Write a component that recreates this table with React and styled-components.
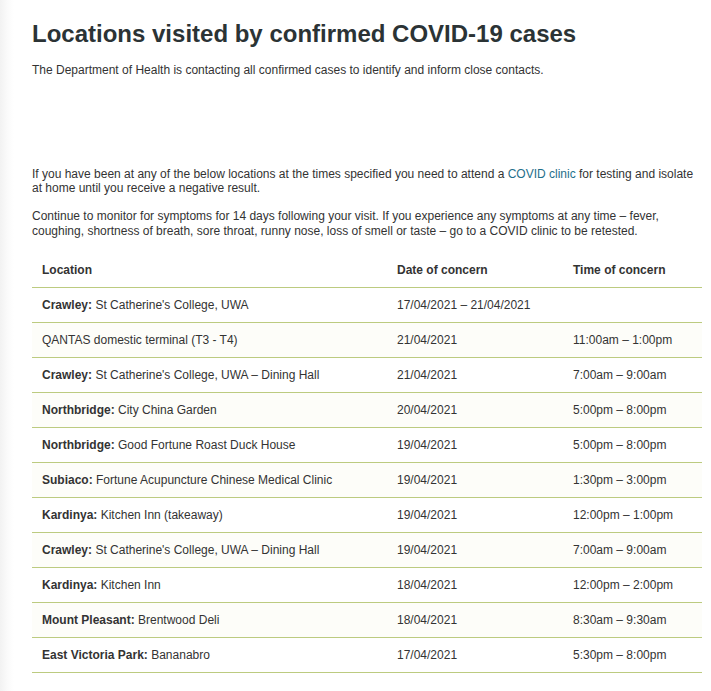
import { createGlobalStyle, styled } from "styled-components";

const GlobalStyle = createGlobalStyle`
  body {
    margin: 0;
    background: linear-gradient(to right, #f2f2f2 0, #fbfbfb 8px, #ffffff 14px);
    font-family: "Liberation Sans", Arial, sans-serif;
    color: #333;
  }
`;

const Page = styled.div`
  width: 670px;
  padding: 18px 0 20px 32px;
`;

const Title = styled.h1`
  margin: 0 0 14px;
  font-size: 24px;
  line-height: 31px;
  font-weight: 700;
  color: #2b3335;
`;

const Text = styled.p`
  margin: 0 0 ${(p) => p.$gap || 14}px;
  font-size: 12px;
  line-height: ${(p) => p.$lh || 14}px;
  color: #333;
`;

const Link = styled.a`
  color: #1f6f8b;
  text-decoration: none;
`;

const Table = styled.table`
  width: 670px;
  border-collapse: collapse;
  table-layout: fixed;
  font-size: 12px;
  margin-top: 1px;
`;

const Head = styled.th`
  text-align: left;
  font-weight: 700;
  color: #333;
  height: 34px;
  padding: 0 10px;
  border-bottom: 1px solid #bccb80;
`;

const Cell = styled.td`
  height: 34px;
  padding: 0 10px;
  border-bottom: 1px solid #bccb80;
  color: #333;
`;

const Row = styled.tr`
  background: ${(p) => (p.$odd ? "#fdfdf9" : "#ffffff")};
`;

const rows = [
  ["Crawley:", "St Catherine's College, UWA", "17/04/2021 – 21/04/2021", ""],
  ["", "QANTAS domestic terminal (T3 - T4)", "21/04/2021", "11:00am – 1:00pm"],
  ["Crawley:", "St Catherine's College, UWA – Dining Hall", "21/04/2021", "7:00am – 9:00am"],
  ["Northbridge:", "City China Garden", "20/04/2021", "5:00pm – 8:00pm"],
  ["Northbridge:", "Good Fortune Roast Duck House", "19/04/2021", "5:00pm – 8:00pm"],
  ["Subiaco:", "Fortune Acupuncture Chinese Medical Clinic", "19/04/2021", "1:30pm – 3:00pm"],
  ["Kardinya:", "Kitchen Inn (takeaway)", "19/04/2021", "12:00pm – 1:00pm"],
  ["Crawley:", "St Catherine's College, UWA – Dining Hall", "19/04/2021", "7:00am – 9:00am"],
  ["Kardinya:", "Kitchen Inn", "18/04/2021", "12:00pm – 2:00pm"],
  ["Mount Pleasant:", "Brentwood Deli", "18/04/2021", "8:30am – 9:30am"],
  ["East Victoria Park:", "Bananabro", "17/04/2021", "5:30pm – 8:00pm"],
];

const App = () => {
  return (
    <>
      <GlobalStyle />
      <Page>
        <Title>Locations visited by confirmed COVID-19 cases</Title>
        <Text $gap={90}>
          The Department of Health is contacting all confirmed cases to identify and inform close contacts.
        </Text>
        <Text>
          If you have been at any of the below locations at the times specified you need to attend a{" "}
          <Link href="#">COVID clinic</Link> for testing and isolate at home until you receive a negative result.
        </Text>
        <Text $lh={15}>
          Continue to monitor for symptoms for 14 days following your visit. If you experience any symptoms at any
          time – fever, coughing, shortness of breath, sore throat, runny nose, loss of smell or taste – go to a
          COVID clinic to be retested.
        </Text>
        <Table>
          <colgroup>
            <col style={{ width: 355 }} />
            <col style={{ width: 176 }} />
            <col style={{ width: 139 }} />
          </colgroup>
          <thead>
            <tr>
              <Head>Location</Head>
              <Head>Date of concern</Head>
              <Head>Time of concern</Head>
            </tr>
          </thead>
          <tbody>
            {rows.map((r, i) => (
              <Row key={i} $odd={i % 2 === 1}>
                <Cell>
                  {r[0] && <strong>{r[0]}</strong>}
                  {r[0] ? " " : ""}
                  {r[1]}
                </Cell>
                <Cell>{r[2]}</Cell>
                <Cell>{r[3]}</Cell>
              </Row>
            ))}
          </tbody>
        </Table>
      </Page>
    </>
  );
};

export default App;
